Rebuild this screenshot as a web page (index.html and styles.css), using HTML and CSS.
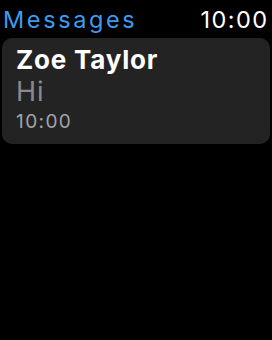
FILE: index.html
```html
<!DOCTYPE html>
<html lang="en">
<head>
    <meta charset="UTF-8">
    <meta name="viewport" content="width=device-width, initial-scale=1.0">
    <title>Messages</title>
    <link rel="stylesheet" href="styles.css">
</head>
<body>
    <div class="screen">
        <div class="header">
            <span class="title">Messages</span>
            <span class="clock">10:00</span>
        </div>
        <div class="thread">
            <div class="sender">Zoe Taylor</div>
            <div class="preview">Hi</div>
            <div class="time">10:00</div>
        </div>
    </div>
</body>
</html>
```

FILE: styles.css
```css
body {
    margin: 0;
    background: #000;
    font-family: Inter, "Noto Sans", sans-serif;
}
.screen {
    width: 272px;
    height: 340px;
    padding: 0 2px;
    box-sizing: border-box;
}
.header {
    display: flex;
    justify-content: space-between;
    align-items: baseline;
    padding: 5px 3px 0 1px;
    height: 35px;
    box-sizing: border-box;
}
.title {
    color: #3d9cf0;
    font-size: 23.5px;
    letter-spacing: 2.6px;
}
.clock {
    color: #fff;
    font-size: 23.5px;
    letter-spacing: 1.4px;
    margin-right: -1.4px;
}
.thread {
    background: #232323;
    border-radius: 10px;
    padding: 7px 14px 9px;
    margin-top: 3px;
}
.sender {
    color: #fff;
    font-size: 26px;
    font-weight: 700;
    line-height: 30px;
    letter-spacing: 0.8px;
}
.preview {
    color: #8a8a8e;
    font-size: 27px;
    line-height: 33px;
    letter-spacing: 1px;
}
.time {
    color: #a3a3a8;
    font-size: 19px;
    line-height: 27px;
    letter-spacing: 1.4px;
}
```
